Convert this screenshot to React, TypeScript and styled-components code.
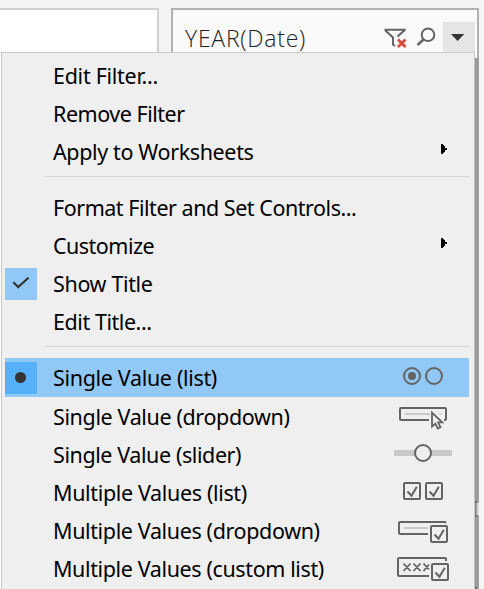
import React from "react";
import styled, { createGlobalStyle } from "styled-components";

const GlobalStyle = createGlobalStyle`
  * { box-sizing: border-box; }
  body { margin: 0; background: #f4f4f4; }
`;

const INK = "#646464";

const Stage = styled.main`
  position: relative;
  width: 484px;
  height: 589px;
  overflow: hidden;
  background: #f4f4f4;
`;

const Columns = styled.div`
  display: grid;
  grid-template-columns: 159px 308px;
  column-gap: 12px;
  height: 100%;
  padding-top: 8px;
`;

const Sheet = styled.section`
  border: 2px solid #d1d1d1;
  border-left: 0;
  border-bottom: 0;
  background: #fff;
`;

const Shelf = styled.aside`
  display: grid;
  grid-template-rows: 495px 1fr;
  row-gap: 12px;
`;

const Card = styled.section`
  border: 2px solid #b1b1b1;
  background: #fafafa;
`;

const CardHeader = styled.header`
  display: flex;
  height: 44px;
  padding: 12px 2px 0 12px;
`;

const CardTitle = styled.h2<{ $tracking: number }>`
  flex: 1;
  margin: 0;
  color: #222;
  font: 300 23px/33px "Open Sans", "Noto Sans", sans-serif;
  letter-spacing: ${(p) => p.$tracking}px;
  white-space: nowrap;
`;

const Tools = styled.div`
  display: flex;
  gap: 4px;
`;

const CardMenuButton = styled.button`
  width: 32px;
  height: 32px;
  padding: 0;
  border: 0;
  background: #e5e5e5;
`;

const Menu = styled.nav`
  position: absolute;
  left: 1px;
  top: 52px;
  width: 474px;
  height: 600px;
  padding: 4px 5px 0 3px;
  border: 1px solid #c9c9c9;
  background: #efefef;
`;

const MenuShadow = styled.div`
  position: absolute;
  left: 475px;
  top: 58px;
  bottom: 0;
  width: 4px;
  background: linear-gradient(
    to right,
    rgba(0, 0, 0, 0.43) 1px,
    rgba(0, 0, 0, 0.34) 1px 2px,
    rgba(0, 0, 0, 0.16) 2px 3px,
    rgba(0, 0, 0, 0.07) 3px
  );
`;

const Mark = styled.span<{ $fill?: string }>`
  display: block;
  width: 32px;
  height: 32px;
  background: ${(p) => p.$fill ?? "transparent"};
`;

const Label = styled.span<{ $tracking: number }>`
  color: #000;
  font: 21.5px/38px "Noto Sans", "Open Sans", sans-serif;
  letter-spacing: ${(p) => p.$tracking}px;
  white-space: nowrap;
`;

const Item = styled.div<{ $active?: boolean }>`
  display: grid;
  grid-template-columns: 32px 1fr 60px;
  column-gap: 16px;
  align-items: start;
  height: ${(p) => (p.$active ? 39 : 38)}px;
  margin-bottom: ${(p) => (p.$active ? 1 : 0)}px;
  padding-right: 15px;
  background: ${(p) => (p.$active ? "#91c8f6" : "transparent")};

  ${Mark} {
    margin-top: ${(p) => (p.$active ? 4 : 3)}px;
  }

  ${Label} {
    line-height: ${(p) => (p.$active ? 40 : 38)}px;
  }
`;

const Divider = styled.hr<{ $after: number }>`
  height: 1px;
  margin: 5px 0 ${(p) => p.$after}px 40px;
  border: 0;
  background: #d3d3d3;
`;

const Svg = styled.svg`
  display: block;
  overflow: visible;
`;

const RowArt = ({ children }: { children: React.ReactNode }) => (
  <Svg width="60" height="38" viewBox="0 0 60 38" fill="none" stroke={INK} strokeWidth="2">
    {children}
  </Svg>
);

const CheckBox = ({ x, y }: { x: number; y: number }) => (
  <g>
    <rect x={x + 1} y={y + 1} width="16" height="16" rx="1" />
    <path d={`M${x + 4.5} ${y + 9.5}l4 4.3 5.3-9`} />
  </g>
);

const Submenu = () => (
  <RowArt>
    <path d="M47 11h2v1h1v1h1v2h2v2h-2v2h-1v1h-1v1h-2z" fill="#000" stroke="none" shapeRendering="crispEdges" />
  </RowArt>
);

const RadioArt = () => (
  <RowArt>
    <circle cx="18" cy="18" r="8" />
    <circle cx="18" cy="18" r="4" fill={INK} stroke="none" />
    <circle cx="40" cy="18" r="8" />
  </RowArt>
);

const DropdownArt = () => (
  <RowArt>
    <path d="M35 22H7q-1 0-1-1V11q0-1 1-1h44q1 0 1 1v10q0 1-1 1h-1" />
    <path d="M11 16h25M45.500 16h2" stroke="#c9c9c9" />
    <path d="M38 14.500v14l3.300-2.800 2.500 4.800 2.700-1.400-2.400-4.700h4.200z" strokeWidth="1.800" />
  </RowArt>
);

const SliderArt = () => (
  <RowArt>
    <rect y="14" width="58" height="6" fill="#c9c9c9" stroke="none" />
    <circle cx="29" cy="17" r="8" fill="#efefef" />
  </RowArt>
);

const ListArt = () => (
  <RowArt>
    <CheckBox x={9} y={8} />
    <CheckBox x={31} y={8} />
  </RowArt>
);

const MultiDropdownArt = () => (
  <RowArt>
    <path d="M34 22H6q-1 0-1-1V11q0-1 1-1h45l1 1" />
    <path d="M10 16h24" stroke="#c9c9c9" />
    <CheckBox x={36} y={13} />
  </RowArt>
);

const CustomListArt = () => (
  <RowArt>
    <path d="M35 26H5q-1 0-1-1V9q0-1 1-1h46q1 0 1 1v2" />
    <path d="M9.500 13.500l7 7.500m0-7.500l-7 7.500M19.500 13.500l7 7.500m0-7.500l-7 7.500M29.500 13.500l5.500 6M35 14.500l-5.500 6.500" strokeWidth="1.800" />
    <CheckBox x={37} y={13} />
  </RowArt>
);

const Tick = () => (
  <Svg width="32" height="32" fill="none" stroke="#333" strokeWidth="2.200">
    <path d="M8.300 14.200l4.900 4.800L23.500 9.700" />
  </Svg>
);

const Dot = () => (
  <Svg width="32" height="32">
    <circle cx="15.500" cy="15.500" r="5.500" fill="#333" />
  </Svg>
);

const FunnelClear = () => (
  <Svg width="24" height="32" fill="none" stroke={INK} strokeWidth="2">
    <path d="M13.500 14.500L20.800 8V7.800H1.500V8.500L9 15.500v7l2 1.500" />
    <path d="M14 17.500l7.500 7.500m0-7.500L14 25" stroke="#d94a38" strokeWidth="2.700" />
  </Svg>
);

const Magnifier = () => (
  <Svg width="27" height="32" fill="none" stroke={INK} strokeWidth="2">
    <circle cx="16" cy="12.800" r="6.300" />
    <path d="M11.500 17.500l-6 5.500" strokeWidth="2.500" />
  </Svg>
);

const Caret = () => (
  <Svg width="32" height="32">
    <path d="M8 12h13.200l-6.600 7z" fill="#333" />
  </Svg>
);

type Entry = {
  text: string;
  tracking: number;
  art?: React.ReactNode;
  mark?: React.ReactNode;
  markFill?: string;
  active?: boolean;
};

const editing: Entry[] = [
  { text: "Edit Filter...", tracking: -0.28 },
  { text: "Remove Filter", tracking: -0.48 },
  { text: "Apply to Worksheets", tracking: -0.37, art: <Submenu /> },
];

const display: Entry[] = [
  { text: "Format Filter and Set Controls...", tracking: -0.47 },
  { text: "Customize", tracking: -0.52, art: <Submenu /> },
  { text: "Show Title", tracking: -0.35, mark: <Tick />, markFill: "#91c8f6" },
  { text: "Edit Title...", tracking: -0.44 },
];

const modes: Entry[] = [
  { text: "Single Value (list)", tracking: -0.33, art: <RadioArt />, mark: <Dot />, markFill: "#56b0fa", active: true },
  { text: "Single Value (dropdown)", tracking: -0.37, art: <DropdownArt /> },
  { text: "Single Value (slider)", tracking: -0.41, art: <SliderArt /> },
  { text: "Multiple Values (list)", tracking: -0.35, art: <ListArt /> },
  { text: "Multiple Values (dropdown)", tracking: -0.37, art: <MultiDropdownArt /> },
  { text: "Multiple Values (custom list)", tracking: -0.38, art: <CustomListArt /> },
];

const Group = ({ entries }: { entries: Entry[] }) => (
  <>
    {entries.map((e) => (
      <Item key={e.text} $active={e.active}>
        <Mark $fill={e.markFill}>{e.mark}</Mark>
        <Label $tracking={e.tracking}>{e.text}</Label>
        {e.art}
      </Item>
    ))}
  </>
);

export default function App() {
  return (
    <>
      <GlobalStyle />
      <Stage>
        <Columns>
          <Sheet />
          <Shelf>
            <Card>
              <CardHeader>
                <CardTitle $tracking={0.75}>YEAR(Date)</CardTitle>
                <Tools>
                  <FunnelClear />
                  <Magnifier />
                  <CardMenuButton aria-label="Filter menu">
                    <Caret />
                  </CardMenuButton>
                </Tools>
              </CardHeader>
            </Card>
            <Card />
          </Shelf>
        </Columns>
        <MenuShadow />
        <Menu>
          <Group entries={editing} />
          <Divider $after={12} />
          <Group entries={display} />
          <Divider $after={11} />
          <Group entries={modes} />
        </Menu>
      </Stage>
    </>
  );
}
